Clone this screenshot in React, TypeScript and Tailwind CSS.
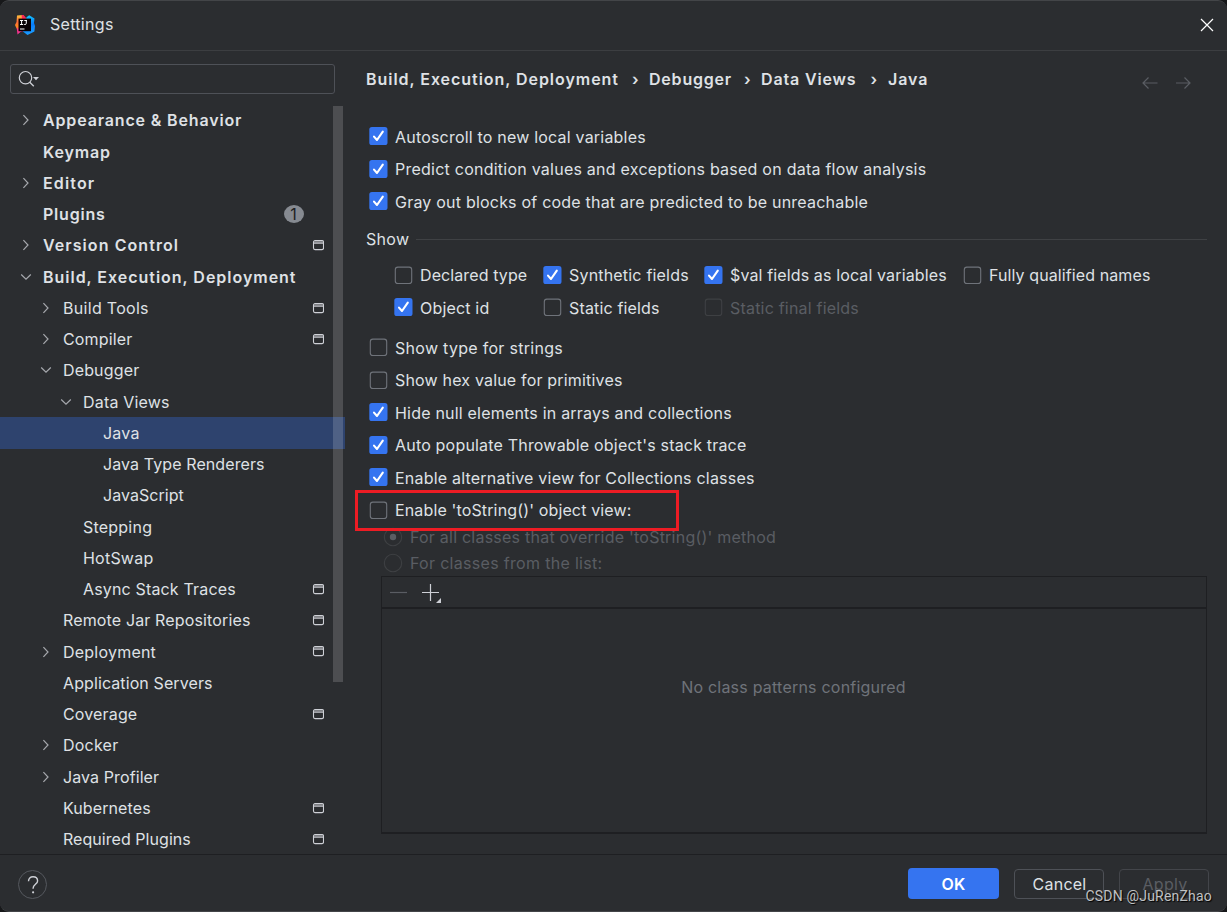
import type { ReactNode } from "react";

type TreeRow = {
  label: string;
  level: 0 | 1 | 2 | 3;
  spacing?: string;
  arrow?: "right" | "down";
  project?: boolean;
  badge?: string;
  selected?: boolean;
};

const TREE: TreeRow[] = [
  { label: "Appearance & Behavior", level: 0, arrow: "right", spacing: "tracking-[0.85px]" },
  { label: "Keymap", level: 0, spacing: "tracking-[0.85px]" },
  { label: "Editor", level: 0, arrow: "right", spacing: "tracking-[1.15px]" },
  { label: "Plugins", level: 0, badge: "1", spacing: "tracking-[0.8px]" },
  { label: "Version Control", level: 0, arrow: "right", project: true, spacing: "tracking-[1.07px]" },
  { label: "Build, Execution, Deployment", level: 0, arrow: "down", spacing: "tracking-[0.98px]" },
  { label: "Build Tools", level: 1, arrow: "right", project: true, spacing: "tracking-[0.3px]" },
  { label: "Compiler", level: 1, arrow: "right", project: true, spacing: "tracking-[0.15px]" },
  { label: "Debugger", level: 1, arrow: "down", spacing: "tracking-[0.15px]" },
  { label: "Data Views", level: 2, arrow: "down", spacing: "tracking-[0.18px]" },
  { label: "Java", level: 3, selected: true },
  { label: "Java Type Renderers", level: 3, spacing: "tracking-[0.1px]" },
  { label: "JavaScript", level: 3, spacing: "tracking-[0.05px]" },
  { label: "Stepping", level: 2 },
  { label: "HotSwap", level: 2 },
  { label: "Async Stack Traces", level: 2, project: true, spacing: "tracking-[0.16px]" },
  { label: "Remote Jar Repositories", level: 1, project: true, spacing: "tracking-[0.14px]" },
  { label: "Deployment", level: 1, arrow: "right", project: true },
  { label: "Application Servers", level: 1, spacing: "tracking-[0.1px]" },
  { label: "Coverage", level: 1, project: true, spacing: "tracking-[0.15px]" },
  { label: "Docker", level: 1, arrow: "right" },
  { label: "Java Profiler", level: 1, arrow: "right", spacing: "tracking-[0.1px]" },
  { label: "Kubernetes", level: 1, project: true, spacing: "tracking-[0.1px]" },
  { label: "Required Plugins", level: 1, project: true, spacing: "tracking-[0.05px]" },
];

const INDENT = ["pl-[15.5px]", "pl-[35.5px]", "pl-[55.5px]", "pl-[75.5px]"];

function Logo() {
  return (
    <svg width="20" height="20" viewBox="0 0 20 20" className="shrink-0">
      <defs>
        <linearGradient id="ij-warm" x1="0.3" y1="0" x2="0.3" y2="1">
          <stop offset="0" stopColor="#fdc33a" />
          <stop offset="0.35" stopColor="#ff6a3c" />
          <stop offset="0.6" stopColor="#fd8a1d" />
          <stop offset="0.75" stopColor="#ff318c" />
          <stop offset="1" stopColor="#e9378f" />
        </linearGradient>
        <linearGradient id="ij-cool" x1="0" y1="0" x2="0.2" y2="1">
          <stop offset="0" stopColor="#18d6ff" />
          <stop offset="0.6" stopColor="#087cfa" />
          <stop offset="1" stopColor="#1a9bff" />
        </linearGradient>
      </defs>
      <path d="M2 .5 8 0l3 4v12l-5 .5L2.500 19.500 1.800 14 0 10l1.500-3z" fill="url(#ij-warm)" />
      <path d="M6.500 0h2L12 4H7z" fill="#fe2857" />
      <path d="M11.500 2.200 14.200.2 19.500 3.500 19 8l1 3-.6 5.600-6.900 3.400-4.600-3.500z" fill="url(#ij-cool)" />
      <rect x="3.500" y="3.600" width="12.500" height="12.600" fill="#0a0205" />
      <path d="M5 5.500h3.200M6.600 5.500v4M5 9.500h3.200M9.300 5.500h2.600M11.300 5.500v2.800q0 1.200-1.200 1.200h-.9M5 14h4.500" stroke="#fff" strokeWidth="1" fill="none" />
    </svg>
  );
}

function Arrow({ dir }: { dir?: "right" | "down" }) {
  return (
    <span className="flex w-[20px] shrink-0 items-center justify-center">
      {dir && (
        <svg width="12" height="12" viewBox="0 0 12 12" fill="none" stroke="#a6a8ad" strokeWidth="1.2">
          {dir === "right" ? <path d="M3.400 1.200 8 6 3.400 10.800" /> : <path d="M1.200 3.500 6 8.200 10.800 3.500" />}
        </svg>
      )}
    </span>
  );
}

function ProjectIcon() {
  return (
    <svg width="12" height="11" viewBox="0 0 12 11" fill="none" className="shrink-0">
      <rect x="1.500" y="0.600" width="10" height="9" rx="1.5" stroke="#ced0d6" strokeWidth="1.1" />
      <path d="M2 1.200h9v1.700H2z" fill="#8a8c90" />
      <path d="M1.500 3.300h10" stroke="#ced0d6" strokeWidth="0.9" />
    </svg>
  );
}

function TreeItem({ row }: { row: TreeRow }) {
  const spacing = row.spacing ?? "tracking-[0.22px]";
  return (
    <div className={`flex h-[31.25px] shrink-0 items-center leading-[31.25px] ${INDENT[row.level]} ${row.selected ? "bg-[#2e436e]" : ""}`}>
      <Arrow dir={row.arrow} />
      <span className={`ml-[7.5px] flex-1 pt-px ${spacing} ${row.level === 0 ? "font-[570]" : ""}`}>{row.label}</span>
      {row.badge && (
        <span className="mr-[41px] flex h-[18px] w-[20px] items-center justify-center rounded-[50%] bg-[#868a91] pr-px leading-[18px] text-[#1e1f22]">
          {row.badge}
        </span>
      )}
      {row.project && (
        <span className="mt-[0.5px] mr-[21px]">
          <ProjectIcon />
        </span>
      )}
    </div>
  );
}

function Box({ checked, disabled }: { checked?: boolean; disabled?: boolean }) {
  return (
    <svg width="19" height="19" viewBox="0 0 19 19" fill="none" className="shrink-0">
      {checked ? (
        <>
          <rect x="0.3" y="0.1" width="18.2" height="18" rx="2.6" fill="#3574f0" />
          <path d="M5 9.6 8 13 13.8 4.6" stroke="#fff" strokeWidth="2.1" strokeLinecap="round" strokeLinejoin="round" />
        </>
      ) : (
        <rect x="1.3" y="1.1" width="16.4" height="16.4" rx="2.6" stroke={disabled ? "#3e4043" : "#6f737a"} strokeWidth="1.1" />
      )}
    </svg>
  );
}

type CheckProps = {
  children: ReactNode;
  checked?: boolean;
  disabled?: boolean;
  up?: boolean;
  spacing?: string;
  className: string;
};

function Check({ children, checked, disabled, up, spacing = "tracking-[0.21px]", className }: CheckProps) {
  return (
    <label className={`flex items-start ${className}`}>
      <Box checked={checked} disabled={disabled} />
      <span className={`ml-[7px] whitespace-nowrap leading-5 ${spacing} ${up ? "-mt-px" : ""} ${disabled ? "text-[#5a5d63]" : ""}`}>{children}</span>
    </label>
  );
}

function Radio({ children, checked, spacing, className }: { children: ReactNode; checked?: boolean; spacing: string; className: string }) {
  return (
    <label className={`flex items-start text-[#5a5d63] ${className}`}>
      <svg width="20" height="20" viewBox="0 0 20 20" fill="none" className="shrink-0">
        <circle cx="10" cy="10" r="8.7" stroke="#3e4043" strokeWidth="1.1" />
        {checked && <circle cx="10" cy="10" r="3.2" fill="#5a5d63" />}
      </svg>
      <span className={`ml-[7px] whitespace-nowrap leading-5 ${spacing}`}>{children}</span>
    </label>
  );
}

function Sidebar() {
  return (
    <aside className="flex w-[345px] shrink-0 flex-col overflow-hidden">
      <div className="mt-[13px] ml-[10px] flex h-[30px] w-[325px] shrink-0 items-center rounded-[3px] border border-[#4e5157] pl-[7px]">
        <svg width="24" height="18" viewBox="0 0 24 18" fill="none">
          <circle cx="7.500" cy="7.7" r="6.2" stroke="#ced0d6" strokeWidth="1.2" />
          <path d="m11.800 12.200 4 4" stroke="#ced0d6" strokeWidth="1.3" />
          <path d="M15 7h6l-3 3.300z" fill="#ced0d6" />
        </svg>
      </div>
      <div className="relative mt-[10.75px] flex min-h-0 flex-1 flex-col overflow-hidden">
        {TREE.map((row) => (
          <TreeItem key={row.label} row={row} />
        ))}
        <div className="absolute top-[1.25px] left-[333px] h-[576px] w-[10px] bg-white/16" />
      </div>
    </aside>
  );
}

function Breadcrumbs() {
  return (
    <div className="flex h-[20px] items-start leading-5 font-[570] tracking-[0.82px]">
      <span className="w-[266px] tracking-[0.96px]">Build, Execution, Deployment</span>
      <span className="w-[17px]">›</span>
      <span className="w-[95px] tracking-[0.8px]">Debugger</span>
      <span className="w-[17px]">›</span>
      <span className="w-[109.500px] tracking-[0.85px]">Data Views</span>
      <span className="w-[17.500px]">›</span>
      <span className="tracking-[0.9px]">Java</span>
      <svg width="52" height="14" viewBox="0 0 52 14" fill="none" stroke="#5a5d63" strokeWidth="1.2" className="mt-[7px] mr-[34px] ml-auto">
        <path d="M16.500 7H2M7.500 1.500 2 7l5.500 5.500M35 7h14M43.500 1.500 49 7l-5.500 5.500" />
      </svg>
    </div>
  );
}

function Content() {
  return (
    <main className="flex min-w-0 flex-1 flex-col pt-[18px] pl-[21px]">
      <Breadcrumbs />
      <div className="mt-[38px] ml-[3px] flex flex-col">
        <Check checked className="h-[33px]" spacing="tracking-[0.2px]">Autoscroll to new local variables</Check>
        <Check checked up className="h-[32px]" spacing="tracking-[0.24px]">Predict condition values and exceptions based on data flow analysis</Check>
        <Check checked className="h-[37px]">Gray out blocks of code that are predicted to be unreachable</Check>
      </div>
      <div className="flex h-[37px] items-start leading-5">
        <span className="tracking-[0.3px]">Show</span>
        <span className="mt-[10px] mr-[20px] ml-[7px] h-px flex-1 bg-[#3f4144]" />
      </div>
      <div className="ml-[28px] grid grid-cols-[149px_161px_259px_auto]">
        <Check up className="h-[32px]" spacing="tracking-[0.1px]">Declared type</Check>
        <Check checked up className="h-[32px]" spacing="tracking-[0.19px]">Synthetic fields</Check>
        <Check checked up className="h-[32px]" spacing="tracking-[0.13px]">$val fields as local variables</Check>
        <Check up className="h-[32px]" spacing="tracking-[0.1px]">Fully qualified names</Check>
        <Check checked className="h-[40px]" spacing="tracking-[0.18px]">Object id</Check>
        <Check className="h-[40px]" spacing="tracking-[0.16px]">Static fields</Check>
        <Check disabled className="h-[40px]" spacing="tracking-[0.2px]">Static final fields</Check>
      </div>
      <div className="ml-[3px] flex flex-col">
        <Check className="h-[33px]" spacing="tracking-[0.29px]">Show type for strings</Check>
        <Check up className="h-[32px]" spacing="tracking-[0.18px]">Show hex value for primitives</Check>
        <Check checked className="h-[33px]" spacing="tracking-[0.2px]">Hide null elements in arrays and collections</Check>
        <Check checked up className="h-[32px]" spacing="tracking-[0.19px]">Auto populate Throwable object's stack trace</Check>
        <Check checked className="h-[33px]">Enable alternative view for Collections classes</Check>
        <div className="relative flex">
          <Check up className="h-[26px]" spacing="tracking-[0.14px]">Enable 'toString()' object view:</Check>
          <div className="absolute -top-[11px] -left-[14px] h-[41px] w-[324px] border-3 border-[#ed1c24]" />
        </div>
      </div>
      <div className="ml-[17px] flex flex-col">
        <Radio checked className="h-[26px]" spacing="tracking-[0.23px]">For all classes that override 'toString()' method</Radio>
        <Radio className="h-[23px]" spacing="tracking-[0.31px]">For classes from the list:</Radio>
      </div>
      <section className="mr-[20px] ml-[15px] flex h-[258px] flex-col border border-b-2 border-[#1e1f22]">
        <div className="flex h-[32px] shrink-0 items-center border-b-2 border-[#1e1f22]">
          <svg width="64" height="28" viewBox="0 0 64 28" fill="none">
            <path d="M8 14.500h17" stroke="#5a5d63" strokeWidth="1.2" />
            <path d="M40 14.500h17M48.500 6v17" stroke="#ced0d6" strokeWidth="1.2" />
            <path d="M59 20v5h-5z" fill="#ced0d6" />
          </svg>
        </div>
        <div className="flex flex-1 justify-center pt-[68px] pr-px leading-5 tracking-[0.22px] text-[#6f737a]">No class patterns configured</div>
      </section>
    </main>
  );
}

export default function App() {
  return (
    <div className="flex h-[912px] w-[1227px] bg-[#17181a] font-[Inter,sans-serif] text-[16px] text-[#dfe1e5]">
      <div className="relative flex flex-1 flex-col overflow-hidden rounded-[9px] border-t border-b border-[#434548] bg-[#2b2d30]">
        <header className="flex h-[50px] shrink-0 items-center border-b border-[#3c3e41] pb-[2px] pl-[15px]">
          <Logo />
          <span className="-mt-[2px] ml-[15px] leading-5 tracking-[0.3px]">Settings</span>
          <svg width="14" height="14" viewBox="0 0 14 14" fill="none" stroke="#fff" strokeWidth="1.2" className="mt-px mr-[13px] ml-auto">
            <path d="m1 1 12 12M13 1 1 13" />
          </svg>
        </header>
        <div className="flex min-h-0 flex-1">
          <Sidebar />
          <Content />
        </div>
        <footer className="flex h-[57px] shrink-0 items-start border-t border-[#1e1f22] pt-[13px] pr-[18px] pl-[18px] leading-5 tracking-[0.25px]">
          <span className="mt-[2px] flex size-[29px] items-center justify-center rounded-full border border-[#55585e]">
            <svg width="12" height="20" viewBox="0 0 12 20" fill="none">
              <path d="M1.500 6.200C1.500 3.500 3.300 1.800 6 1.800s4.600 1.700 4.600 4.100c0 3.300-4.500 3.600-4.500 7.300v.6" stroke="#ced0d6" strokeWidth="1.4" />
              <circle cx="6.100" cy="17.300" r="1.100" fill="#ced0d6" />
            </svg>
          </span>
          <button className="ml-auto h-[31px] w-[91px] rounded-[4px] bg-[#3574f0] pt-px font-[570] text-white">OK</button>
          <button className="mt-px ml-[15px] h-[30px] w-[90px] rounded-[4px] border border-[#4e5157] pl-px">Cancel</button>
          <button className="mt-px ml-[15px] h-[30px] w-[90px] rounded-[4px] border border-[#43454a] pl-[2px] text-[#5a5d63]">Apply</button>
        </footer>
        <div className="absolute right-[15px] bottom-[5px] font-[Roboto,sans-serif] text-[14px] leading-5 tracking-[0.2px] text-[#c0c1c3] [text-shadow:1px_1px_1px_#000]">
          CSDN @JuRenZhao
        </div>
      </div>
    </div>
  );
}
